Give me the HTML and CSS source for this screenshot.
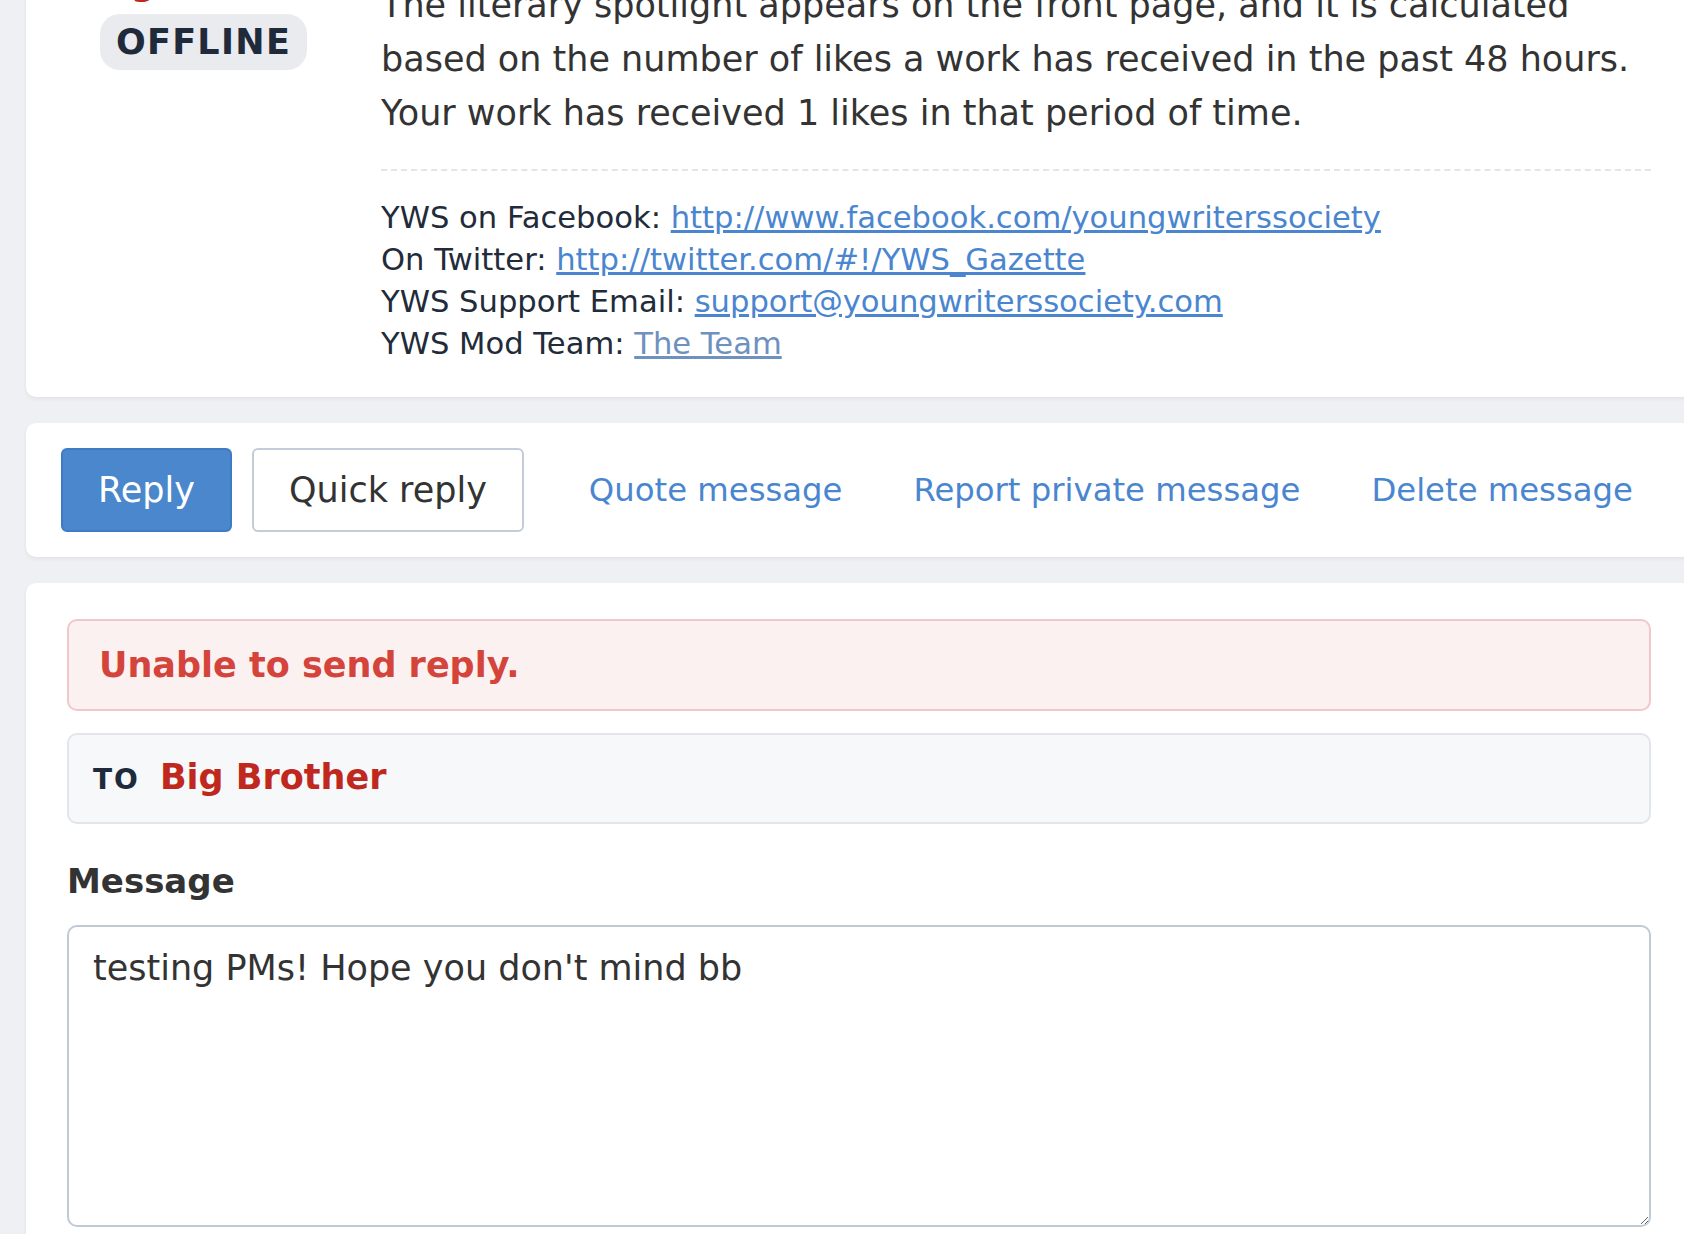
FILE: index.html
```html
<!DOCTYPE html>
<html lang="en">

<head>
	<meta charset="UTF-8">
	<title>Private message</title>
	<meta name="viewport" content="width=device-width, initial-scale=1.0">
	<link rel="stylesheet" href="styles.css">
</head>

<body>
	<div class="page">
		<div class="card post">
			<div class="post-author">
				<div class="author-name">Big Brother</div>
				<span class="status">OFFLINE</span>
			</div>
			<div class="post-body">
				<p class="post-text">The literary spotlight appears on the front page, and it is calculated based on the number of likes a work has received in the past 48 hours. Your work has received 1 likes in that period of time.</p>
				<div class="signature">
					YWS on Facebook: <a href="#">http://www.facebook.com/youngwriterssociety</a><br>
					On Twitter: <a href="#">http://twitter.com/#!/YWS_Gazette</a><br>
					YWS Support Email: <a href="#">support@youngwriterssociety.com</a><br>
					YWS Mod Team: <a href="#" class="visited">The Team</a>
				</div>
			</div>
		</div>

		<div class="card actions">
			<button class="btn btn-primary">Reply</button>
			<button class="btn">Quick reply</button>
			<div class="action-links">
				<a href="#">Quote message</a>
				<a href="#">Report private message</a>
				<a href="#">Delete message</a>
			</div>
		</div>

		<div class="card reply-form">
			<div class="alert-error">Unable to send reply.</div>
			<div class="recipient">
				<span class="recipient-label">TO</span>
				<span class="recipient-name">Big Brother</span>
			</div>
			<label for="message" class="field-label">Message</label>
			<textarea id="message" class="message-box">testing PMs! Hope you don't mind bb</textarea>
		</div>
	</div>
</body>

</html>
```

FILE: styles.css
```css
html,
body {
	overflow: hidden;
}

body {
	font-family: "DejaVu Sans", Verdana, sans-serif;
	background: #eff0f3;
	color: #333;
	margin: 0;
}

.page {
	width: 1666px;
	margin: -59px 0 0 26px;
}

.card {
	background: white;
	border-radius: 10px;
	box-shadow: 0 2px 4px rgba(0, 0, 0, 0.06);
	margin-bottom: 26px;
}

/* post */
.post {
	display: flex;
	padding: 20px 41px 32px 0;
}

.post-author {
	flex: 0 0 355px;
	text-align: center;
}

.author-name {
	color: #c0281e;
	font-size: 34px;
	font-weight: bold;
	line-height: 44px;
	margin-bottom: 9px;
}

.status {
	display: inline-block;
	background: #e9ebef;
	color: #1f2a3b;
	font-size: 35px;
	font-weight: bold;
	letter-spacing: 1.3px;
	line-height: 40px;
	padding: 8px 16px;
	border-radius: 20px;
}

.post-body {
	flex: 1;
	padding-top: 17px;
}

.post-text {
	font-size: 35px;
	line-height: 54px;
	margin: 0 0 29px;
}

.signature {
	border-top: 2px dashed #e3e5e9;
	padding-top: 26px;
	font-size: 30.6px;
	line-height: 42px;
	color: #222b3a;
}

a {
	color: #4a86cf;
}

a.visited {
	color: #6e91c0;
}

/* actions */
.actions {
	display: flex;
	align-items: center;
	gap: 20px;
	padding: 25px 35px;
}

.btn {
	font-family: inherit;
	font-size: 35px;
	line-height: 48px;
	padding: 16px 35px;
	border: 2px solid #c3cdd9;
	border-radius: 6px;
	background: white;
	color: #333;
}

.btn-primary {
	background: #4a87cc;
	border-color: #3f7bc4;
	color: white;
}

.action-links {
	display: flex;
	gap: 71px;
	margin-left: 45px;
}

.action-links a {
	font-size: 32.3px;
	text-decoration: none;
}

/* reply form */
.reply-form {
	padding: 36px 41px 40px 41px;
}

.alert-error {
	background: #fbf1f1;
	border: 2px solid #f1c7cc;
	border-radius: 10px;
	color: #d4443b;
	font-size: 35px;
	font-weight: bold;
	line-height: 48px;
	padding: 20px 30px;
	margin-bottom: 22px;
}

.recipient {
	display: flex;
	align-items: baseline;
	background: #f7f8fa;
	border: 2px solid #e2e5ec;
	border-radius: 10px;
	line-height: 48px;
	padding: 18px 24px;
}

.recipient-label {
	color: #1f2a3b;
	font-size: 28px;
	font-weight: bold;
	letter-spacing: 2px;
	margin-right: 20px;
}

.recipient-name {
	color: #c0281e;
	font-size: 35px;
	font-weight: bold;
}

.field-label {
	display: block;
	font-size: 34px;
	font-weight: bold;
	line-height: 48px;
	margin: 33px 0 20px;
}

.message-box {
	display: block;
	width: 100%;
	height: 302px;
	box-sizing: border-box;
	font-family: inherit;
	font-size: 35px;
	line-height: 52px;
	color: #333;
	padding: 15px 24px;
	border: 2px solid #bfcad7;
	border-radius: 10px;
}
```
